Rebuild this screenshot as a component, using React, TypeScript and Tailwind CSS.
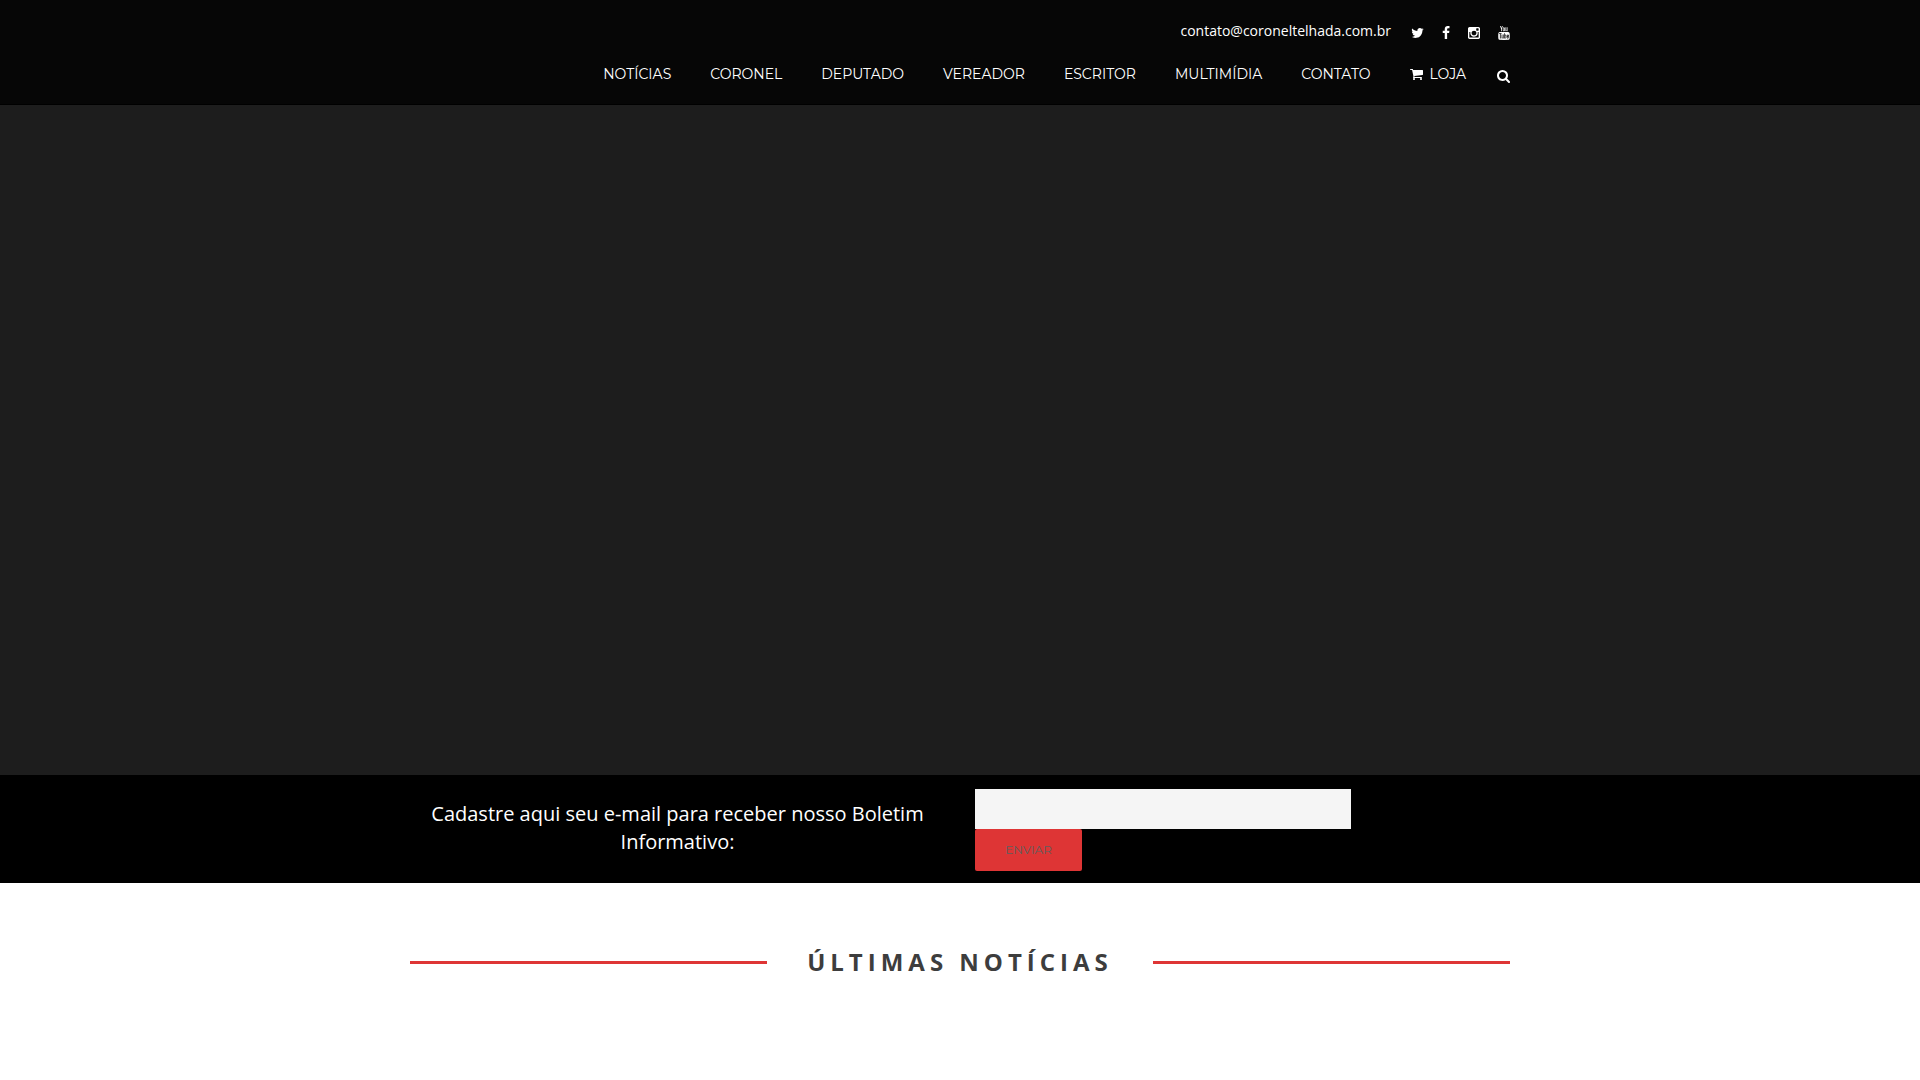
import { useState } from "react";

const navItems = ["NOTÍCIAS", "CORONEL", "DEPUTADO", "VEREADOR", "ESCRITOR", "MULTIMÍDIA", "CONTATO"];

const icons = {
  twitter: {
    box: "64 0 1664 1792",
    size: "w-[13px]",
    d: "M1684 408q-67 98-162 167 1 14 1 42 0 130-38 259.5t-115.5 248.5-184.5 210.5-258 146-323 54.5q-271 0-496-145 35 4 78 4 225 0 401-138-105-2-188-64.5t-114-159.5q33 5 61 5 43 0 85-11-112-23-185.5-111.5t-73.5-205.5v-4q68 38 146 41-66-44-105-115t-39-154q0-88 44-163 121 149 294.5 238.5t371.5 99.5q-8-38-8-74 0-134 94.5-228.5t228.5-94.5q140 0 236 102 109-21 205-78-37 115-142 178 93-10 186-50z",
  },
  facebook: {
    box: "384 0 1024 1792",
    size: "w-2",
    d: "M1343 12v264h-157q-86 0-116 36t-30 108v189h293l-39 296h-254v759h-306v-759h-255v-296h255v-218q0-186 104-288.5t277-102.5q147 0 228 12z",
  },
  instagram: {
    box: "128 0 1536 1792",
    size: "w-3",
    d: "M1490 1426v-648h-135q20 63 20 131 0 126-64 232.5t-174 168.5-240 62q-197 0-337-135.5t-140-327.5q0-68 20-131h-141v648q0 26 17.5 43.5t43.5 17.5h1069q25 0 43-17.5t18-43.5zm-284-533q0-124-90.5-211.5t-218.5-87.5q-127 0-217.5 87.5t-90.5 211.5 90.5 211.5 217.5 87.5q128 0 218.5-87.5t90.5-211.5zm284-360v-165q0-28-20-48.5t-49-20.5h-174q-29 0-49 20.5t-20 48.5v165q0 29 20 49t49 20h174q29 0 49-20t20-49zm174-208v1142q0 81-58 139t-139 58h-1142q-81 0-139-58t-58-139v-1142q0-81 58-139t139-58h1142q81 0 139 58t58 139z",
  },
  youtube: {
    box: "128 0 1536 1792",
    size: "w-3",
    d: "M1099 1244v211q0 67-39 67-23 0-45-22v-301q22-22 45-22 39 0 39 67zm338 1v46h-90v-46q0-68 45-68t45 68zm-966-218h107v-94h-312v94h105v569h100v-569zm288 569h89v-494h-89v378q-30 42-57 42-18 0-21-21-1-3-1-35v-364h-89v391q0 49 8 73 12 37 58 37 48 0 102-61v54zm429-148v-197q0-73-9-99-17-56-71-56-50 0-93 54v-217h-89v663h89v-48q45 55 93 55 54 0 71-55 9-27 9-100zm338-10v-13h-91q0 51-2 61-7 36-40 36-46 0-46-69v-87h179v-103q0-79-27-116-39-51-106-51-68 0-107 51-28 37-28 116v173q0 79 29 116 39 51 108 51 72 0 108-53 18-27 21-54 2-9 2-58zm-608-913v-210q0-69-43-69t-43 69v210q0 70 43 70t43-70zm719 751q0 234-26 350-14 59-58 99t-102 46q-184 21-555 21t-555-21q-58-6-102.5-46t-57.5-99q-26-112-26-350 0-234 26-350 14-59 58-99t103-47q183-20 554-20t555 20q58 7 102.5 47t57.5 99q26 112 26 350zm-998-1276h102l-121 399v271h-100v-271q-14-74-61-212-37-103-65-187h106l71 263zm370 333v175q0 81-28 118-38 51-106 51-67 0-105-51-28-38-28-118v-175q0-80 28-117 38-51 105-51 68 0 106 51 28 37 28 117zm335-162v499h-91v-55q-53 62-103 62-46 0-59-37-8-24-8-75v-394h91v367q0 33 1 35 3 22 21 22 27 0 57-43v-381h91z",
  },
  cart: {
    box: "64 0 1664 1792",
    size: "w-[13px]",
    d: "M704 1536q0 52-38 90t-90 38-90-38-38-90 38-90 90-38 90 38 38 90zm896 0q0 52-38 90t-90 38-90-38-38-90 38-90 90-38 90 38 38 90zm128-1088v512q0 24-16.5 42.5t-40.5 21.5l-1044 122q13 60 13 70 0 16-24 64h920q26 0 45 19t19 45-19 45-45 19h-1024q-26 0-45-19t-19-45q0-11 8-31.5t16-36 21.5-40 15.5-29.5l-177-823h-204q-26 0-45-19t-19-45 19-45 45-19h256q16 0 28.5 6.5t19.5 15.5 13 24.5 8 26 5.5 29.5 4.5 26h1201q26 0 45 19t19 45z",
  },
  search: {
    box: "64 0 1664 1792",
    size: "w-[13px]",
    d: "M1216 832q0-185-131.5-316.5t-316.5-131.5-316.5 131.5-131.5 316.5 131.5 316.5 316.5 131.5 316.5-131.5 131.5-316.5zm512 832q0 52-38 90t-90 38q-54 0-90-38l-343-342q-179 124-399 124-143 0-273.5-55.5t-225-150-150-225-55.5-273.5 55.5-273.5 150-225 225-150 273.5-55.5 273.5 55.5 225 150 150 225 55.5 273.5q0 220-124 399l343 343q37 37 37 90z",
  },
};

function Icon({ name }: { name: keyof typeof icons }) {
  const icon = icons[name];
  return (
    <svg viewBox={icon.box} className={`block h-[14px] shrink-0 fill-white ${icon.size}`} aria-hidden="true">
      <path d={icon.d} />
    </svg>
  );
}

const social: { name: keyof typeof icons; label: string }[] = [
  { name: "twitter", label: "Twitter" },
  { name: "facebook", label: "Facebook" },
  { name: "instagram", label: "Instagram" },
  { name: "youtube", label: "YouTube" },
];

function Header() {
  return (
    <header className="border-b border-black bg-[#060606] text-white">
      <div className="mx-auto max-w-[1100px] pt-5 pb-2.5">
        <div className="flex h-[22px] items-center justify-end gap-5">
          <a href="mailto:contato@coroneltelhada.com.br" className="text-sm leading-5">
            contato@coroneltelhada.com.br
          </a>
          <ul className="flex gap-[18px] pt-1">
            {social.map((s) => (
              <li key={s.name}>
                <a href="#" aria-label={s.label}>
                  <Icon name={s.name} />
                </a>
              </li>
            ))}
          </ul>
        </div>
        <div className="mt-3 flex h-10 items-center justify-end gap-[31px]">
          <nav className="flex items-center gap-[39px] font-[Montserrat,Inter,sans-serif] text-sm leading-5 text-white">
            {navItems.map((item) => (
              <a key={item} href="#">
                {item}
              </a>
            ))}
            <a href="#" className="flex items-center gap-[7px]">
              <Icon name="cart" />
              LOJA
            </a>
          </nav>
          <button type="button" aria-label="Buscar" className="pt-1">
            <Icon name="search" />
          </button>
        </div>
      </div>
    </header>
  );
}

function Newsletter() {
  const [email, setEmail] = useState("");
  return (
    <form className="bg-black" onSubmit={(e) => e.preventDefault()}>
      <div className="mx-auto grid max-w-[1100px] grid-cols-2 gap-[30px] pt-[14px] pb-3">
        <label htmlFor="email" className="px-5 pt-[11px] text-center text-xl leading-7 text-white">
          Cadastre aqui seu e-mail para receber nosso Boletim Informativo:
        </label>
        <div className="flex flex-col items-start">
          <input
            id="email"
            type="email"
            value={email}
            onChange={(e) => setEmail(e.target.value)}
            className="h-10 w-[376px] max-w-full bg-[#f5f5f5] px-3 text-sm text-gray-700"
          />
          <button
            type="submit"
            className="h-[42px] w-[107px] rounded-xs bg-[#de3535] font-[Montserrat,Inter,sans-serif] text-xs text-[#5e5e5e]"
          >
            ENVIAR
          </button>
        </div>
      </div>
    </form>
  );
}

export default function App() {
  return (
    <div className="min-h-screen bg-white font-['Open_Sans',sans-serif]">
      <Header />
      <main>
        <section aria-label="Destaques" className="h-[670px] bg-[#1d1d1d]" />
        <Newsletter />
        <section className="mx-auto flex max-w-[1100px] items-center gap-10 pt-[63px]">
          <div className="h-[3px] flex-1 bg-[#de3535]" />
          <h2 className="text-2xl leading-8 font-bold tracking-[5px] text-[#3d3d3d]">ÚLTIMAS NOTÍCIAS</h2>
          <div className="h-[3px] flex-1 bg-[#de3535]" />
        </section>
      </main>
    </div>
  );
}
